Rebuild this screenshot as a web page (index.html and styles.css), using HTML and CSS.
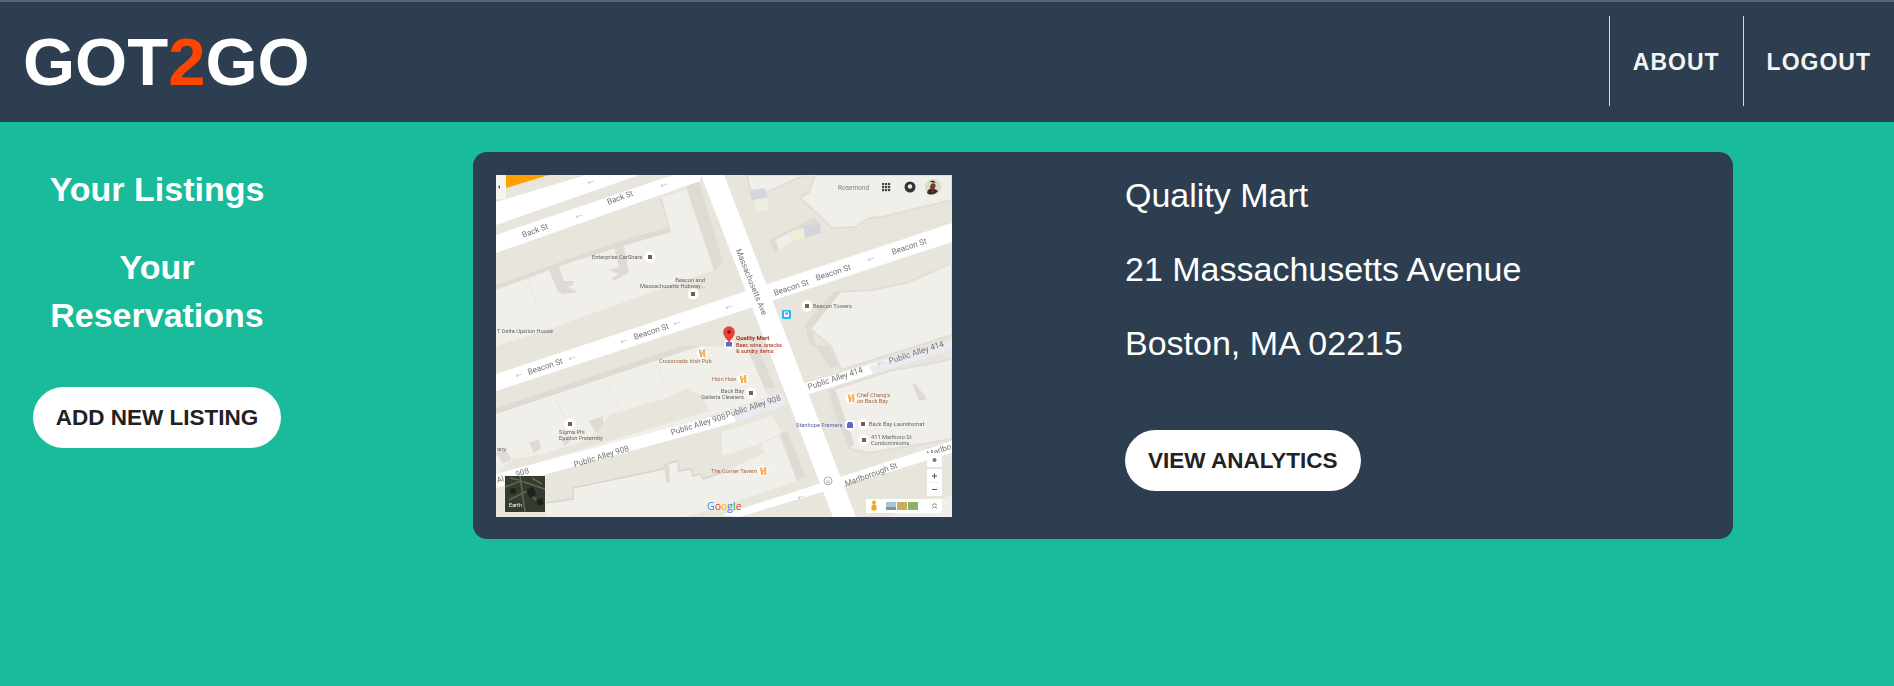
FILE: index.html

```html
<!DOCTYPE html>
<html lang="en">
<head>
  <meta charset="UTF-8" />
  <meta name="viewport" content="width=device-width, initial-scale=1.0"/>
  <title>Got2Go</title>
  <link rel="stylesheet" href="styles.css">
</head>
<body>
  <header class="topbar">
    <a class="logo" href="#">GOT<span class="logo-two">2</span>GO</a>
    <nav class="nav">
      <a class="nav-link" href="#">ABOUT</a>
      <a class="nav-link" href="#">LOGOUT</a>
    </nav>
  </header>

  <main class="page">
    <aside class="sidebar">
      <a class="side-link" href="#">Your Listings</a>
      <a class="side-link" href="#">Your Reservations</a>
      <button class="pill side-button">ADD NEW LISTING</button>
    </aside>

    <section class="listing">
      <svg class="map" viewBox="0 0 456 342" role="img" aria-label="Map of Quality Mart">
        <defs>
          <symbol id="poi" viewBox="0 0 12 12" overflow="visible">
            <circle cx="6" cy="6" r="5.5" fill="#fff"/>
            <rect x="4" y="4" width="4" height="4" fill="#7b5c55"/>
          </symbol>
          <symbol id="food" viewBox="0 0 12 12" overflow="visible">
            <circle cx="6" cy="6" r="5.5" fill="#fff"/>
            <path d="M3.4 2.5v3.2h1.2v4h1v-4h.9M5 2.500v3M7.600 2.500h1.200v7.200h-1v-3h-.7z" fill="none" stroke="#f29423" stroke-width=".9"/>
          </symbol>
          <path id="arrow" d="M-3 0h6M-1.500-1.500L-3 0l1.500 1.500" transform="rotate(-18)" fill="none" stroke="#c3cbe4" stroke-width=".8"/>
        </defs>

        <rect width="456" height="342" fill="#e8e5dd"/>

        <!-- block between Back St and Beacon St -->
        <polygon class="bld" points="0,115 70,88 120,72 175,57 163,23 190,15 218,95 50,155 0,171"/>
        <polygon class="shade" points="0,110 70,85 118,68 173,52 163,23 166,23 175,57 120,73 70,89 0,115"/>
        <polygon class="shade" points="53,95 63,92 68,106 77,106 77,110 72,112 82,117 68,119 62,117"/>
        <polygon class="shade" points="118,70 127,68 133,97 118,106 116,103 123,99 113,95 123,92"/>
        <polygon class="shade" points="190,10 203,7 227,87 218,95"/>
        <polyline class="lot" points="23,75 40,128"/>
        <polyline class="lot" points="110,44 123,70"/>
        <polyline class="lot" points="145,32 155,60"/>
        <polyline class="lot" points="150,125 160,145"/>
        <polyline class="lot" points="70,145 78,170"/>

        <!-- top right block -->
        <polyline class="lot" points="251,0 276,88 456,28"/>
        <polygon class="bld edge" points="251,0 309,0 271,17 266,37 256,23"/>
        <polygon class="bld edge" points="319,0 456,0 456,25 386,42 373,43 360,52 336,53 323,40 304,23 313,17"/>
        <polygon points="254,15 269,13 271,23 256,25" fill="#d6d7de"/>
        <polygon points="258,25 271,23 273,35 261,37" fill="#efeee0"/>
        <polygon class="shade" points="273,65 293,55 319,42 326,53 309,60 279,77"/>
        <polygon points="279,65 293,58 296,67 283,75" fill="#f1efe9"/>
        <polygon points="293,57 308,53 309,63 296,67" fill="#f0eed8"/>
        <polygon points="308,52 324,48 325,58 309,63" fill="#d4d5dc"/>

        <!-- right of Massachusetts, between Beacon St and the alley -->
        <polygon class="bld edge" points="309,150 339,117 376,115 413,107 456,88 456,160 440,165 345,195 335,171"/>
        <polygon class="shade" points="319,171 334,193 343,191 333,171"/>
        <polygon class="shade" points="309,150 339,117 345,117 316,153 320,171 314,171"/>

        <!-- right of Massachusetts, below the alley -->
        <polygon class="bld edge" points="333,216 393,196 433,189 456,184 456,264 373,278 354,274 339,238"/>
        <polygon class="shade" points="333,216 339,214 358,268 354,274 339,238"/>
        <polygon class="shade" points="419,208 431,224 423,226 416,209"/>

        <!-- left of Massachusetts, Beacon St to the alley -->
        <polygon class="bld" points="0,239 205,171 251,172 272,222 0,310"/>
        <polygon class="shade" points="0,233 187,171 203,171 0,239"/>
        <polygon class="shade" points="251,174 263,176 279,213 269,213"/>
        <polygon points="0,300 15,284 48,279 93,264 115,239 170,223 190,214 207,221 213,236 0,300" fill="#e8e5dd"/>
        <polygon class="shade" points="93,246 107,241 107,249 100,258"/>
        <polygon class="shade" points="33,268 43,264 45,273 38,278"/>
        <polygon class="shade" points="0,278 10,274 15,284 7,289"/>
        <polygon class="shade" points="67,264 75,261 73,268 68,271"/>
        <polyline class="lot" points="60,225 80,262"/>
        <polyline class="lot" points="110,208 125,235"/>
        <polyline class="lot" points="160,190 175,222"/>

        <!-- left of Massachusetts, below the alley -->
        <polygon class="bld" points="50,342 50,328 77,324 77,313 167,294 173,288 182,286 183,296 195,294 197,301 205,299 207,304 230,296 251,286 266,279 269,281 266,268 283,261 301,306 226,331 190,342"/>
        <polygon class="bld" points="226,257 276,241 286,258 260,270 226,281"/>
        <polygon class="shade" points="284,258 291,256 309,301 301,306"/>
        <polyline class="wall" points="50,328 77,324 77,313 167,294 173,288 182,286 183,296 195,294 197,301 205,299 207,304 230,296"/>
        <polygon class="shade" points="168,289 173,288 174,308 170,308"/>
        <polygon points="390,342 456,320 456,342" fill="#f1efe9"/>

        <!-- roads -->
        <polygon class="road" points="0,27 90,0 143,0 0,50"/>
        <polygon class="road" points="0,60 177,0 205,0 204,6 0,78"/>
        <polygon class="road" points="0,199 456,48 456,67 0,216"/>
        <polygon class="road" points="0,299 226,239 286,219 291,229 226,251 0,313"/>
        <polygon class="road" points="306,209 439,171 456,166 456,174 313,219"/>
        <polygon class="road" points="226,340 456,266 456,278 243,342"/>
        <polygon class="road" points="205,0 228,0 360,342 337,342"/>
        <polygon class="alley" points="236,236 286,219 291,229 240,247"/>
        <polygon class="alley" points="373,191 456,166 456,174 377,199"/>

        <polygon points="10,0 53,0 10,13" fill="#ffa000"/>
        <rect width="10" height="24" fill="#f5f4f0"/>
        <polygon points="4,10 2,12 4,14" fill="#555"/>

        <use href="#arrow" x="95" y="7"/>
        <use href="#arrow" x="83" y="41"/>
        <use href="#arrow" x="168" y="10"/>
        <use href="#arrow" x="181" y="148"/>
        <use href="#arrow" x="128" y="166"/>
        <use href="#arrow" x="76" y="183"/>
        <use href="#arrow" x="23" y="200"/>
        <use href="#arrow" x="375" y="84"/>
        <use href="#arrow" x="233" y="132"/>
        <use href="#arrow" x="385" y="188"/>
        <use href="#arrow" x="305" y="322"/>

        <!-- road names -->
        <g class="road-name">
          <text transform="translate(125 25) rotate(-20)">Back St</text>
          <text transform="translate(40 58) rotate(-20)">Back St</text>
          <text transform="translate(296 115) rotate(-18)">Beacon St</text>
          <text transform="translate(338 100) rotate(-18)">Beacon St</text>
          <text transform="translate(414 74) rotate(-18)">Beacon St</text>
          <text transform="translate(156 159) rotate(-18)">Beacon St</text>
          <text transform="translate(50 194) rotate(-18)">Beacon St</text>
          <text transform="translate(253 108) rotate(68)">Massachusetts Ave</text>
          <text transform="translate(106 284) rotate(-17)">Public Alley 908</text>
          <text transform="translate(203 252) rotate(-17)">Public Alley 908</text>
          <text transform="translate(258 234) rotate(-18)">Public Alley 908</text>
          <text transform="translate(5 307) rotate(-17)">Al</text>
          <text transform="translate(27 300) rotate(-17)">908</text>
          <text transform="translate(340 206) rotate(-18)">Public Alley 414</text>
          <text transform="translate(421 180) rotate(-18)">Public Alley 414</text>
          <text transform="translate(376 302) rotate(-20)">Marlborough St</text>
          <text transform="translate(444 278) rotate(-20)">Marlbo</text>
        </g>

        <!-- places -->
        <g class="place">
          <text x="96" y="84">Enterprise CarShare</text>
          <text x="209" y="107" text-anchor="end">Beacon and</text>
          <text x="209" y="113" text-anchor="end">Massachusetts Hubway...</text>
          <text x="317" y="133">Beacon Towers</text>
          <text x="1" y="158">T Delta Upsilon House</text>
          <text x="248" y="218" text-anchor="end">Back Bay</text>
          <text x="248" y="224" text-anchor="end">Galleria Cleaners</text>
          <text x="63" y="259">Sigma Phi</text>
          <text x="63" y="265">Epsilon Fraternity</text>
          <text x="1" y="276">any</text>
          <text x="373" y="251">Back Bay Laundromat</text>
          <text x="375" y="264">411 Marlboro St</text>
          <text x="375" y="270">Condominiums</text>
          <text x="342" y="14.5" class="rosemond">Rosemond</text>
        </g>
        <g class="place food-name">
          <text x="163" y="188">Crossroads Irish Pub</text>
          <text x="216" y="206">Hsin Hsin</text>
          <text x="361" y="222">Chef Chang's</text>
          <text x="361" y="228">on Back Bay</text>
          <text x="215" y="298">The Corner Tavern</text>
        </g>
        <text class="place shop-name" x="300" y="252">Stanhope Framers</text>

        <use href="#poi" x="148" y="76" width="12" height="12"/>
        <use href="#poi" x="191" y="113" width="12" height="12"/>
        <use href="#poi" x="305" y="125" width="12" height="12"/>
        <use href="#poi" x="249" y="212" width="12" height="12"/>
        <use href="#poi" x="68" y="243" width="12" height="12"/>
        <use href="#poi" x="361" y="243" width="12" height="12"/>
        <use href="#poi" x="362" y="259" width="12" height="12"/>
        <use href="#food" x="200" y="172" width="12" height="12"/>
        <use href="#food" x="241" y="198" width="12" height="12"/>
        <use href="#food" x="349" y="217" width="12" height="12"/>
        <use href="#food" x="261" y="290" width="12" height="12"/>
        <circle cx="354" cy="250" r="5.5" fill="#fff"/>
        <path d="M351 253v-4l1-2h4l1 2v4z" fill="#5c6bc0"/>

        <rect x="286" y="135" width="9" height="9" rx="1.500" fill="#29b6f6"/>
        <rect x="288" y="136.500" width="5" height="5.500" rx="1" fill="#fff"/>
        <rect x="289" y="137.500" width="3" height="2" fill="#29b6f6"/>

        <circle cx="332" cy="306" r="4" fill="none" stroke="#8a8a8a" stroke-width=".7"/>
        <path d="M330 306h4M330 307.500h4" stroke="#8a8a8a" stroke-width=".5"/>

        <!-- the pin -->
        <circle cx="233" cy="169" r="5" fill="#fff"/>
        <rect x="230" y="167" width="6" height="4.500" fill="#5c6bc0"/>
        <path d="M233 168.500c-1-4-5.800-6.500-5.800-11.500a5.800 5.800 0 0 1 11.600 0c0 5-4.800 7.500-5.800 11.500z" fill="#ea4335"/>
        <circle cx="233" cy="157" r="1.700" fill="#6b1410"/>
        <text class="pin-name" x="240" y="165">Quality Mart</text>
        <text class="pin-note" x="240" y="172">Beer, wine, snacks</text>
        <text class="pin-note" x="240" y="178">&amp; sundry items</text>

        <!-- map controls -->
        <g fill="#444">
          <rect x="386" y="8" width="2.200" height="2.200"/><rect x="389" y="8" width="2.200" height="2.200"/><rect x="392" y="8" width="2.200" height="2.200"/>
          <rect x="386" y="11" width="2.200" height="2.200"/><rect x="389" y="11" width="2.200" height="2.200"/><rect x="392" y="11" width="2.200" height="2.200"/>
          <rect x="386" y="14" width="2.200" height="2.200"/><rect x="389" y="14" width="2.200" height="2.200"/><rect x="392" y="14" width="2.200" height="2.200"/>
        </g>
        <circle cx="414" cy="12" r="5.500" fill="#333"/>
        <circle cx="414" cy="11.500" r="2.200" fill="#eee"/>
        <circle cx="437" cy="12" r="8" fill="#d9dcc4"/>
        <path d="M431 18c.5-3 2-4 4-4.500 2-.3 5 .5 7 2.500-1.500 3-8 5-11 2z" fill="#3a2630"/>
        <path d="M434 12c.3-1.500 1-3 2-3.500 2-1 4 .5 3.500 3-.3 1.500-1.500 3-3 3.500-1.500 0-2.500-1.500-2.500-3z" fill="#7a3a28"/>
        <path d="M434 6.500c2-1.500 5-1 5.500 1.500-2-.8-4-.8-5.500-1.500z" fill="#241a18"/>
        <path d="M435 15l3 1.500-1 1.500z" fill="#b23a34"/>

        <rect x="8.500" y="300.500" width="41" height="37" fill="#f0eee8"/>
        <rect x="9" y="301" width="40" height="36" fill="#363b31"/>
        <path d="M9 312l16-6 24 8M13 325l18-9 14 14M24 301l5 36M14 303l9 2M36 303l10 6" fill="none" stroke="#5e6b4c" stroke-width="1.500"/>
        <path d="M30 315l7-3 3 8-6 3zM40 325l6-2 2 6-6 2zM14 314l5-1 1 5-5 1z" fill="#1f221c"/>
        <text class="earth" x="13" y="332">Earth</text>

        <text class="google" x="211" y="335"><tspan fill="#4285f4">G</tspan><tspan fill="#ea4335">o</tspan><tspan fill="#fbbc05">o</tspan><tspan fill="#4285f4">g</tspan><tspan fill="#34a853">l</tspan><tspan fill="#ea4335">e</tspan></text>

        <rect class="ctrl" x="431" y="278" width="15" height="14"/>
        <circle cx="438.500" cy="285" r="2" fill="#777"/>
        <rect class="ctrl" x="431" y="294" width="15" height="27"/>
        <path d="M434 307.500h9" stroke="#e2e2e2" stroke-width=".6"/>
        <path d="M438.500 298.500v5M436 301h5M436 314.500h5" stroke="#555" stroke-width="1.100"/>
        <rect class="ctrl" x="370" y="324" width="76" height="14"/>
        <circle cx="378" cy="327.500" r="2" fill="#f5a623"/>
        <rect x="375.500" y="329.500" width="5" height="6" rx="1.500" fill="#f5a623"/>
        <rect x="390" y="327" width="10" height="8" fill="#a9c4d8"/>
        <rect x="390" y="332" width="10" height="3" fill="#7e93a3"/>
        <rect x="401" y="327" width="10" height="8" fill="#c8ae5a"/>
        <rect x="412" y="327" width="10" height="8" fill="#8fb069"/>
        <path d="M436 330.500l2.500-2 2.500 2M436 333.500l2.500-2 2.500 2" fill="none" stroke="#555" stroke-width=".8"/>
      </svg>

      <div class="info">
        <p class="info-line">Quality Mart</p>
        <p class="info-line">21 Massachusetts Avenue</p>
        <p class="info-line">Boston, MA 02215</p>
        <button class="pill info-button">VIEW ANALYTICS</button>
      </div>
    </section>
  </main>
</body>
</html>
```

FILE: styles.css

```css
* {
  box-sizing: border-box;
}
body {
  margin: 0;
  min-height: 100vh;
  display: flex;
  flex-direction: column;
  font-family: "Liberation Sans", Arial, sans-serif;
  background: #18bc9c;
  color: #fff;
}
a {
  color: inherit;
  text-decoration: none;
}

/* top bar */
.topbar {
  height: 122px;
  border-top: 2px solid #56666f;
  background: #2c3e50;
  display: flex;
  justify-content: space-between;
  align-items: flex-start;
}
.logo {
  font-size: 67px;
  font-weight: bold;
  line-height: 77px;
  margin: 21px 0 0 23px;
}
.logo-two {
  color: #ff4500;
}
.nav {
  display: flex;
  margin-top: 14px;
}
.nav-link {
  height: 90px;
  line-height: 92px;
  padding: 0 23px;
  border-left: 1px solid #d5d8dc;
  font-size: 23px;
  font-weight: bold;
  letter-spacing: 1px;
  color: #f5f5f5;
}

/* page body */
.page {
  flex: 1;
  display: flex;
  align-items: flex-start;
  gap: 159px;
  padding-top: 30px;
  background: linear-gradient(#18bc9c 33px, #19b698 33px, #19b698 34px, #19bb9b 34px);
}
.sidebar {
  width: 314px;
  padding: 13px 33px 0;
  display: flex;
  flex-direction: column;
  align-items: center;
  gap: 30px;
  text-align: center;
}
.side-link {
  font-size: 34px;
  font-weight: bold;
  line-height: 48px;
}
.pill {
  height: 61px;
  padding: 0 23px;
  border: none;
  border-radius: 31px;
  background: #fff;
  color: #222;
  font-family: inherit;
  font-size: 22.5px;
  font-weight: bold;
  white-space: nowrap;
}
.side-button {
  margin-top: 18px;
}

/* listing card */
.listing {
  width: 1260px;
  display: grid;
  grid-template-columns: 629px 1fr;
  padding: 19px 23px 22px;
  border-radius: 14px;
  background: #2c3e50;
}
.map {
  display: block;
  width: 456px;
  height: 342px;
  margin-top: 4px;
  filter: blur(.4px);
}
.info-line {
  margin: 0 0 26px;
  font-size: 34px;
  line-height: 48px;
}
.info-button {
  margin-top: 37px;
}

/* map drawing */
.bld {
  fill: #f1efe9;
}
.edge {
  stroke: #e0ded6;
  stroke-width: 2;
}
.shade {
  fill: #dddbd3;
}
.wall {
  fill: none;
  stroke: #d6d5cd;
  stroke-width: 1.5;
}
.lot {
  fill: none;
  stroke: #e2dfd6;
  stroke-width: .6;
}
.road {
  fill: #fff;
}
.alley {
  fill: #e9ebf1;
}
.ctrl {
  fill: #fff;
}
.road-name text {
  font: 8.1px Roboto, sans-serif;
  fill: #757575;
  text-anchor: middle;
}
.place {
  font: 5.7px Roboto, sans-serif;
  fill: #666;
}
.rosemond {
  font-size: 6.5px;
  fill: #808080;
}
.food-name {
  fill: #a5674a;
}
.shop-name {
  fill: #5a63a8;
}
.pin-name {
  font: bold 6px Roboto, sans-serif;
  fill: #a52714;
}
.pin-note {
  font: 5.7px Roboto, sans-serif;
  fill: #a52714;
}
.earth {
  font: 5.5px Roboto, sans-serif;
  fill: #fff;
}
.google {
  font: 10.5px "Open Sans", sans-serif;
}
```
